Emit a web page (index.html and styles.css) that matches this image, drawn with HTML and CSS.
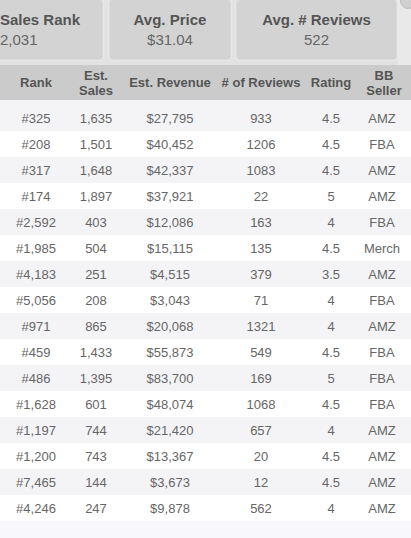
FILE: index.html
```html
<!DOCTYPE html>
<html>
<head>
<meta charset="utf-8">
<link rel="stylesheet" href="styles.css">
</head>
<body>
<div class="page">
  <div class="summary">
    <div class="card card-first">
      <div class="card-title">Sales Rank</div>
      <div class="card-value">2,031</div>
    </div>
    <div class="card card-mid">
      <div class="card-title">Avg. Price</div>
      <div class="card-value">$31.04</div>
    </div>
    <div class="card card-last">
      <div class="card-title">Avg. # Reviews</div>
      <div class="card-value">522</div>
    </div>
    <div class="side-strip"><span class="close-dot"></span></div>
  </div>
  <div class="table">
    <div class="row head">
      <div>Rank</div><div>Est.<br>Sales</div><div>Est. Revenue</div><div># of Reviews</div><div>Rating</div><div>BB<br>Seller</div>
    </div>
    <div class="row odd first"><div>#325</div><div>1,635</div><div>$27,795</div><div>933</div><div>4.5</div><div>AMZ</div></div>
    <div class="row"><div>#208</div><div>1,501</div><div>$40,452</div><div>1206</div><div>4.5</div><div>FBA</div></div>
    <div class="row odd"><div>#317</div><div>1,648</div><div>$42,337</div><div>1083</div><div>4.5</div><div>AMZ</div></div>
    <div class="row"><div>#174</div><div>1,897</div><div>$37,921</div><div>22</div><div>5</div><div>AMZ</div></div>
    <div class="row odd"><div>#2,592</div><div>403</div><div>$12,086</div><div>163</div><div>4</div><div>FBA</div></div>
    <div class="row"><div>#1,985</div><div>504</div><div>$15,115</div><div>135</div><div>4.5</div><div>Merch</div></div>
    <div class="row odd"><div>#4,183</div><div>251</div><div>$4,515</div><div>379</div><div>3.5</div><div>AMZ</div></div>
    <div class="row"><div>#5,056</div><div>208</div><div>$3,043</div><div>71</div><div>4</div><div>FBA</div></div>
    <div class="row odd"><div>#971</div><div>865</div><div>$20,068</div><div>1321</div><div>4</div><div>AMZ</div></div>
    <div class="row"><div>#459</div><div>1,433</div><div>$55,873</div><div>549</div><div>4.5</div><div>FBA</div></div>
    <div class="row odd"><div>#486</div><div>1,395</div><div>$83,700</div><div>169</div><div>5</div><div>FBA</div></div>
    <div class="row"><div>#1,628</div><div>601</div><div>$48,074</div><div>1068</div><div>4.5</div><div>FBA</div></div>
    <div class="row odd"><div>#1,197</div><div>744</div><div>$21,420</div><div>657</div><div>4</div><div>AMZ</div></div>
    <div class="row"><div>#1,200</div><div>743</div><div>$13,367</div><div>20</div><div>4.5</div><div>AMZ</div></div>
    <div class="row odd"><div>#7,465</div><div>144</div><div>$3,673</div><div>12</div><div>4.5</div><div>AMZ</div></div>
    <div class="row"><div>#4,246</div><div>247</div><div>$9,878</div><div>562</div><div>4</div><div>AMZ</div></div>
  </div>
</div>
</body>
</html>
```
FILE: styles.css
```css
html, body {
  margin: 0;
  padding: 0;
  background: #f7f7fc;
  font-family: "Liberation Sans", Arial, sans-serif;
  overflow: hidden;
}
.page {
  width: 411px;
  height: 538px;
  background: #f7f7fc;
}
.summary {
  position: relative;
  display: flex;
  gap: 5px;
  height: 65px;
  background: #e2e2e2;
  overflow: hidden;
  padding-right: 14px;
}
.card {
  box-sizing: border-box;
  height: 61px;
  margin-top: -1px;
  background: #d3d3d3;
  border: 1px solid #d9d9d9;
  border-radius: 4px;
  box-shadow: 0 0 0 1px #e8e8e8;
  display: flex;
  flex-direction: column;
  align-items: center;
  padding-top: 10px;
}
.card-first {
  width: 114px;
  margin-left: -11px;
  align-items: flex-start;
  padding-left: 10px;
}
.card-mid {
  width: 122px;
  margin-left: 1px;
}
.card-last {
  width: 161px;
  margin-left: 0;
}
.card-title {
  font-weight: bold;
  font-size: 15px;
  line-height: 20px;
  color: #555;
}
.card-value {
  font-size: 15px;
  line-height: 20px;
  color: #666;
}
.side-strip {
  position: absolute;
  right: 0;
  top: 0;
  width: 13px;
  height: 65px;
  background: #e9e9e9;
}
.close-dot {
  position: absolute;
  top: -7px;
  left: 2px;
  width: 14px;
  height: 14px;
  border-radius: 50%;
  background: #cfcfcf;
  border: 1px solid #bdbdbd;
}
.table {
  font-size: 13px;
  color: #666;
}
.row {
  display: grid;
  grid-template-columns: 72px 48px 100px 82px 58px 44px;
  height: 26px;
  align-items: center;
  background: #ffffff;
}
.row > div {
  text-align: center;
  white-space: nowrap;
}
.row.odd {
  background: #f4f4f6;
}
.row.first {
  height: 26px;
  padding-top: 5px;
}
.row.head {
  height: 35px;
  background: #cbcbcb;
  color: #555;
  font-weight: bold;
  line-height: 15px;
}
.row.head > div:nth-child(6) {
  padding-left: 4px;
}
```
